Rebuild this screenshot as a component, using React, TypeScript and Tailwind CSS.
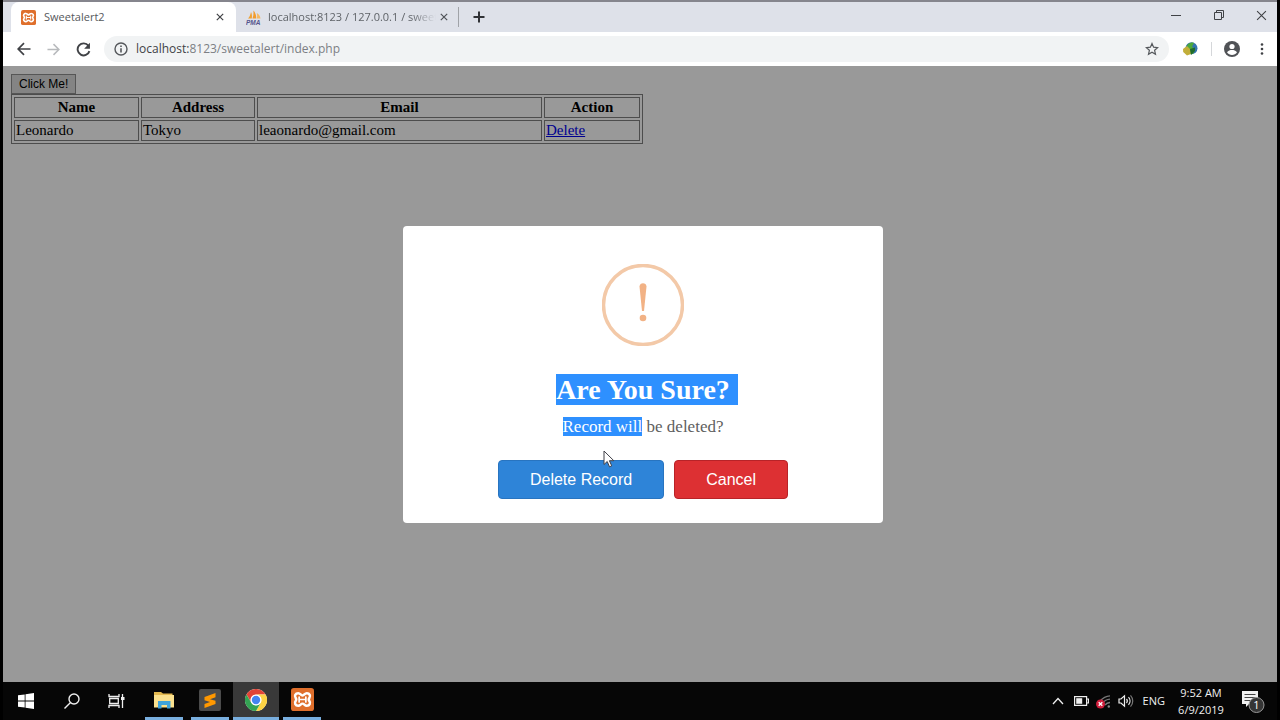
import React from 'react';

const uiFont = "font-['Open_Sans','Noto_Sans',sans-serif]";

function XamppIcon({ className }: { className?: string }) {
    return (
        <svg viewBox="0 0 24 24" className={className} aria-hidden="true">
            <rect width="24" height="24" rx="3" fill="#df6f2c" />
            <path
                d="M7.500 5.500c2.500 0 2.500 2.200 4.500 2.200s2-2.200 4.500-2.200c3 0 4.200 3 2.700 4.800-.8 1-.8 2.400 0 3.400 1.500 1.800.3 4.800-2.700 4.800-2.500 0-2.500-2.200-4.500-2.200s-2 2.200-4.500 2.200c-3 0-4.200-3-2.700-4.800.8-1 .8-2.400 0-3.400-1.500-1.800-.3-4.800 2.700-4.800z"
                fill="#df6f2c"
                stroke="#fff"
                strokeWidth="2.600"
            />
            <path d="M9 12h6M8.500 9.500v5M15.500 9.500v5" stroke="#fff" strokeWidth="1.800" strokeLinecap="round" />
        </svg>
    );
}

function PmaIcon() {
    return (
        <svg viewBox="0 0 16 16" className="size-4 shrink-0" aria-hidden="true">
            <path d="M2 9.500C3.500 8 4.500 5.500 5 3c1 2 1.200 4.500.8 6.500z" fill="#f0a030" />
            <path d="M6.500 9.500C7.500 7 7.600 4.500 7.400 1.500c2 2 3 5 2.800 8z" fill="#f39c2c" />
            <path d="M10.800 9.500c.5-2 .4-3.500 0-5.500 2 1.200 3.400 3.200 3.700 5.500z" fill="#f6b860" />
            <text x="0" y="15.500" fontSize="6.500" fontWeight="bold" fontStyle="italic" fontFamily="Liberation Sans, sans-serif" fill="#55558c">PMA</text>
        </svg>
    );
}

function CloseIcon({ className }: { className?: string }) {
    return (
        <svg viewBox="0 0 10 10" className={className} fill="none" stroke="currentColor" aria-hidden="true">
            <path d="M1 1l8 8M9 1L1 9" />
        </svg>
    );
}

function TabStrip() {
    return (
        <div className="flex h-8 items-stretch border-t-2 border-[#85858d] bg-[#dee1e9] pl-2">
            <div className="flex w-[225px] items-center rounded-t-lg bg-white pr-3 pl-[10px]">
                <XamppIcon className="size-[15px] shrink-0" />
                <span className="ml-2 flex-1 text-[11px] text-[#55585c]">Sweetalert2</span>
                <button type="button" aria-label="Close Sweetalert2" className="text-[#404246]">
                    <CloseIcon className="size-2 stroke-[1.5]" />
                </button>
            </div>
            <div className="flex w-[222px] items-center px-[10px]">
                <PmaIcon />
                <span className="ml-[6px] flex-1 overflow-hidden text-[11px] whitespace-nowrap text-[#5f6368] [mask-image:linear-gradient(to_right,black_85%,transparent)]">
                    localhost:8123 / 127.0.0.1 / sweet
                </span>
                <button type="button" aria-label="Close phpMyAdmin" className="ml-1 text-[#505358]">
                    <CloseIcon className="size-2 stroke-[1.5]" />
                </button>
            </div>
            <div className="h-5 w-px self-center bg-[#a0a3a8]" />
            <button type="button" aria-label="New tab" className="ml-2 flex w-6 items-center justify-center">
                <svg viewBox="0 0 12 12" className="size-3 stroke-[#303236] stroke-2"><path d="M6 .5v11M.5 6h11" /></svg>
            </button>
            <div className="ml-auto flex items-center pr-[10px] pb-1 text-[#404246]">
                <button type="button" aria-label="Minimize" className="flex w-[43px] justify-end">
                    <svg viewBox="0 0 10 10" className="size-[10px]" fill="none" stroke="currentColor"><path d="M0 5.500h10" /></svg>
                </button>
                <button type="button" aria-label="Restore" className="flex w-[43px] justify-end">
                    <svg viewBox="0 0 10 10" className="size-[10px]" fill="none" stroke="currentColor">
                        <path d="M.5 2.500h7v7h-7zM2.500 2.500v-2h7v7h-2" />
                    </svg>
                </button>
                <button type="button" aria-label="Close window" className="flex w-[43px] justify-end">
                    <CloseIcon className="size-[11px]" />
                </button>
            </div>
        </div>
    );
}

function AddressBar() {
    return (
        <div className="flex h-[34px] items-center bg-white pl-[14px]">
            <button type="button" aria-label="Back" className="text-[#404246]">
                <svg viewBox="0 0 14 14" className="size-[14px]" fill="none" stroke="currentColor" strokeWidth="1.700"><path d="M13.500 7H1.500M7 1.200L1.200 7 7 12.800" /></svg>
            </button>
            <button type="button" aria-label="Forward" className="ml-4 text-[#b8babd]">
                <svg viewBox="0 0 14 14" className="size-[13px]" fill="none" stroke="currentColor" strokeWidth="1.600"><path d="M.5 7h12M7 1.200L12.800 7 7 12.800" /></svg>
            </button>
            <button type="button" aria-label="Reload" className="ml-4 text-[#404246]">
                <svg viewBox="0 0 14 14" className="size-[15px]" fill="none" stroke="currentColor" strokeWidth="1.800">
                    <path d="M11.600 3.500A5.600 5.600 0 1 0 12.500 8.500" />
                    <path d="M13 .8v5.400H7.600z" fill="currentColor" stroke="none" />
                </svg>
            </button>
            <div className="ml-[13px] flex h-[26px] flex-1 items-center rounded-full bg-[#f1f3f4] px-[10px]">
                <svg viewBox="0 0 14 14" className="size-[14px] shrink-0" fill="none" stroke="#55585c" strokeWidth="1.400">
                    <circle cx="7" cy="7" r="6" />
                    <path d="M7 6.200v4.200M7 3.500v1.500" strokeWidth="1.600" />
                </svg>
                <div className="ml-2 flex-1 text-[12px] text-[#7c7f84]">
                    <span className="text-[#404246]">localhost:</span>8123/sweetalert/index.php
                </div>
                <button type="button" aria-label="Bookmark this page">
                    <svg viewBox="0 0 14 14" className="size-[14px]" fill="none" stroke="#55585c" strokeWidth="1.200">
                        <path d="M7 1.500l1.600 3.700 4 .4-3 2.700.9 4L7 10.200l-3.500 2.100.9-4-3-2.700 4-.4z" />
                    </svg>
                </button>
            </div>
            <svg viewBox="0 0 16 16" className="ml-[13px] size-4" aria-hidden="true">
                <circle cx="9.500" cy="7.200" r="6" fill="#3474ae" />
                <path d="M5 4.500C7 1.500 10 1 12 2l-2 3.500 3 3-2 4.500c-3 .5-6-2-6-5z" fill="#4da83a" />
                <path d="M1 8l4-3 3 3 1 5-4 1.500L1.200 11z" fill="#c2ae3a" />
                <path d="M8 8l5-1.500v3.500l-4 4z" fill="#1f6a2c" />
            </svg>
            <div className="ml-[13px] h-[14px] w-px bg-[#d5d7da]" />
            <button type="button" aria-label="Profile" className="ml-3">
                <svg viewBox="0 0 16 16" className="size-4">
                    <circle cx="8" cy="8" r="8" fill="#505256" />
                    <circle cx="8" cy="5.500" r="2.600" fill="#fff" />
                    <path d="M3 11.300c1.200-1.700 3.200-2.300 5-2.300s3.800.6 5 2.300c-1.200 1.800-3 2.700-5 2.700s-3.800-.9-5-2.700z" fill="#fff" />
                </svg>
            </button>
            <button type="button" aria-label="Menu" className="mr-[13px] ml-5">
                <svg viewBox="0 0 4 14" className="h-[14px] w-1" fill="#404246">
                    <circle cx="2" cy="2.500" r="1.300" />
                    <circle cx="2" cy="7" r="1.300" />
                    <circle cx="2" cy="11.500" r="1.300" />
                </svg>
            </button>
        </div>
    );
}

function RecordsTable() {
    const cell = 'border border-[#808080] px-px py-0';
    return (
        <table className="w-[632px] max-w-full table-fixed border-separate border-spacing-[2px] border border-[#808080] text-[15px] leading-[19px]">
            <thead>
                <tr>
                    <th className={`${cell} w-[125px]`}>Name</th>
                    <th className={`${cell} w-[114px]`}>Address</th>
                    <th className={cell}>Email</th>
                    <th className={`${cell} w-[96px]`}>Action</th>
                </tr>
            </thead>
            <tbody>
                <tr>
                    <td className={cell}>Leonardo</td>
                    <td className={cell}>Tokyo</td>
                    <td className={cell}>leaonardo@gmail.com</td>
                    <td className={cell}>
                        <a href="#delete" className="text-[#0000ee] underline">Delete</a>
                    </td>
                </tr>
            </tbody>
        </table>
    );
}

function ConfirmDialog() {
    return (
        <div className="absolute inset-0 flex items-center justify-center bg-black/40 pt-px pl-[6px]">
            <div role="dialog" aria-labelledby="dialog-title" className="relative flex w-[480px] max-w-full flex-col items-center rounded bg-white pt-[38px] pb-6">
                <svg viewBox="0 0 82 82" className="size-[82px]" aria-hidden="true">
                    <circle cx="41" cy="41" r="39.500" fill="none" stroke="#f3c9a8" strokeWidth="3.500" />
                    <path d="M37.500 22.500c0-4.500 7-4.500 7 0L42 47h-2z" fill="#f2b285" />
                    <circle cx="41" cy="54" r="3.300" fill="#f2b285" />
                </svg>
                <h2 id="dialog-title" className="mt-7 text-[28px] leading-[31px] font-bold text-white">
                    <span className="-mr-2 block bg-[#2e90ff] pr-2">Are You Sure?</span>
                </h2>
                <p className="mt-3 text-[17px] leading-5 text-[#606060]">
                    <span className="bg-[#2e90ff] text-white">Record will</span> be deleted?
                </p>
                <div className="mt-[23px] flex gap-[10px] font-['Liberation_Sans',Arial,sans-serif] text-base text-white">
                    <button type="button" className="h-[39px] rounded border border-[#2874c0] bg-[#2e84d8] px-[31px]">Delete Record</button>
                    <button type="button" className="h-[39px] rounded border border-[#b82328] bg-[#dd3033] px-[31px]">Cancel</button>
                </div>
                <svg viewBox="0 0 12 18" className="absolute top-[224px] left-[200px] h-[18px] w-3" aria-hidden="true">
                    <path d="M1 1v13.500l3.200-3 2.300 5.300 2.200-1-2.300-5.100h4.400z" fill="#fff" stroke="#404048" />
                </svg>
            </div>
        </div>
    );
}

function TaskbarItem({ label, open, active, children }: { label: string; open?: boolean; active?: boolean; children: React.ReactNode }) {
    return (
        <button type="button" aria-label={label} className={`flex w-[46px] flex-col items-center ${active ? 'bg-[#393939]' : ''}`}>
            <span className="flex flex-1 items-center">{children}</span>
            {open && <span className={`h-[3px] bg-[#78aede] ${active ? 'w-full' : 'w-[38px]'}`} />}
        </button>
    );
}

function Taskbar() {
    return (
        <div className={`flex h-[38px] items-stretch bg-[#060606] text-[#f0f0f0] ${uiFont}`}>
            <TaskbarItem label="Start">
                <svg viewBox="0 0 16 16" className="size-4" fill="#fff"><path d="M0 2.300L6.700 1.400v6.200H0zM7.500 1.300L16 0v7.600H7.500zM0 8.400h6.700v6.200L0 13.700zM7.500 8.400H16V16l-8.500-1.300z" /></svg>
            </TaskbarItem>
            <TaskbarItem label="Search">
                <svg viewBox="0 0 16 16" className="size-4" fill="none" stroke="#eee" strokeWidth="1.400"><circle cx="10" cy="6" r="5" /><path d="M6.300 9.700L.5 15.500" /></svg>
            </TaskbarItem>
            <TaskbarItem label="Task view">
                <svg viewBox="0 0 17 16" className="mr-1 h-4 w-[17px]" fill="none" stroke="#eee" strokeWidth="1.300">
                    <path d="M1 1v2.500h10V1M1 15v-2.500h10V15M1.700 5.500h8.600v5H1.700zM14.500 1v14" />
                    <path d="M13 4h3.500v3H13z" fill="#eee" stroke="none" />
                </svg>
            </TaskbarItem>
            <TaskbarItem label="File Explorer" open>
                <svg viewBox="0 0 20 18" className="h-[18px] w-5">
                    <path d="M0 1h7l2 1.500h9.500V6H0z" fill="#e3b84f" />
                    <path d="M0 4h20v12.500H0z" fill="#fbe18e" />
                    <path d="M4 17.500V10h12.500v7.500H13V14H7.500v3.500z" fill="#3fa4dd" />
                </svg>
            </TaskbarItem>
            <TaskbarItem label="Sublime Text" open>
                <svg viewBox="0 0 22 22" className="size-[22px]">
                    <rect width="22" height="22" rx="2" fill="#4b4b4b" />
                    <path d="M5.500 8l11-4v4.200l-5.500 2 5.500 1.600V15l-11 4v-4l5.500-2-5.500-1.800z" fill="#ff9800" />
                </svg>
            </TaskbarItem>
            <TaskbarItem label="Google Chrome" open active>
                <svg viewBox="0 0 22 22" className="size-[22px]">
                    <circle cx="11" cy="11" r="11" fill="#fff" />
                    <path d="M1.470 5.500A11 11 0 0 1 20.530 5.500H11A5.500 5.500 0 0 0 6.240 13.750z" fill="#e24436" />
                    <path d="M20.530 5.500A11 11 0 0 1 11 22l4.760-8.250A5.500 5.500 0 0 0 11 5.500z" fill="#fdd344" />
                    <path d="M11 22A11 11 0 0 1 1.470 5.500l4.770 8.250a5.500 5.500 0 0 0 9.520 0z" fill="#34a353" />
                    <circle cx="11" cy="11" r="5.300" fill="#fff" />
                    <circle cx="11" cy="11" r="4.200" fill="#4484f0" />
                </svg>
            </TaskbarItem>
            <TaskbarItem label="XAMPP" open>
                <XamppIcon className="size-[23px]" />
            </TaskbarItem>
            <div className="ml-auto flex items-center pr-3">
                <svg viewBox="0 0 12 8" className="mr-[10px] h-2 w-3" fill="none" stroke="#eee" strokeWidth="1.300"><path d="M1 7l5-5.500L11 7" /></svg>
                <svg viewBox="0 0 15 10" className="mr-[7px] h-[10px] w-[15px]">
                    <path d="M.6.6h12v8.800H.6zM13 3h1.500v4H13" fill="none" stroke="#eee" strokeWidth="1.200" />
                    <path d="M2.200 2.200h6v5.600h-6z" fill="#eee" />
                </svg>
                <svg viewBox="0 0 15 14" className="mr-[7px] size-[15px]">
                    <path d="M4 6.500C7 3 10 1.500 14 1.300M6.500 8.500c2-2.500 4.500-3.700 7.500-3.900M9 10.500c1.300-1.700 3-2.400 5-2.500" fill="none" stroke="#777" strokeWidth="1.300" />
                    <circle cx="12.800" cy="12" r="1.200" fill="#888" />
                    <circle cx="4.500" cy="9.500" r="4.500" fill="#cf1e3c" />
                    <path d="M2.700 7.700l3.600 3.600M6.300 7.700l-3.600 3.600" stroke="#fff" strokeWidth="1.300" />
                </svg>
                <svg viewBox="0 0 16 14" className="mr-[9px] h-[14px] w-4" fill="none" stroke="#eee" strokeWidth="1.200">
                    <path d="M1 5h2l3.500-3.200v10.400L3 9H1z" />
                    <path d="M8.500 5c1 1.200 1 2.800 0 4M10.500 3.200c2 2.200 2 5.400 0 7.600" />
                    <path d="M12.500 1.300c3 3.200 3 8.200 0 11.400" stroke="#777" />
                </svg>
                <span className="text-[11px]">ENG</span>
                <div className="ml-3 w-12 text-center text-[11px] leading-[17px] whitespace-nowrap">
                    <div>9:52 AM</div>
                    <div>6/9/2019</div>
                </div>
                <button type="button" aria-label="Notifications" className="ml-4">
                    <svg viewBox="0 0 24 24" className="size-6">
                        <path d="M1 2h16v13H8l-3 3v-3H1z" fill="#f0f0f0" />
                        <path d="M3.500 5.500h11M3.500 8.500h11M3.500 11.500h7" stroke="#444" />
                        <circle cx="15.500" cy="16" r="7.500" fill="#353535" stroke="#999" />
                        <text x="15.500" y="20" textAnchor="middle" fontSize="11" fill="#fff">1</text>
                    </svg>
                </button>
            </div>
        </div>
    );
}

export default function App() {
    return (
        <div className="flex min-h-screen flex-col bg-black">
            <div className="mx-[3px] flex flex-1 flex-col">
                <header className={uiFont}>
                    <TabStrip />
                    <AddressBar />
                </header>
                <main className="relative flex-1 bg-white px-2 pt-2 font-['Liberation_Serif','Times_New_Roman',serif] text-black">
                    <button type="button" className="block h-5 border border-[#909090] bg-[#dddddd] px-[7px] font-['Liberation_Sans',Arial,sans-serif] text-[12px] leading-4">
                        Click Me!
                    </button>
                    <RecordsTable />
                    <ConfirmDialog />
                </main>
                <Taskbar />
            </div>
        </div>
    );
}
